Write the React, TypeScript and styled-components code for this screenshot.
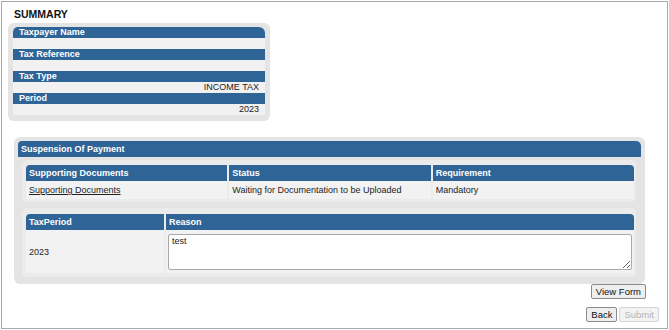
import React from "react";
import styled, { createGlobalStyle } from "styled-components";

const Global = createGlobalStyle`
  html, body { margin: 0; padding: 0; background: #ffffff; }
  body { font-family: "Liberation Sans", Arial, sans-serif; font-size: 9px; color: #222; }
  * { box-sizing: border-box; }
`;

const BLUE = "#2f6496";

const Frame = styled.div`
  margin: 1px 0 0 1px;
  width: 667px;
  height: 328px;
  border: 1px solid #a8a8a8;
  display: flex;
  flex-direction: column;
`;

const Title = styled.h1`
  margin: 4px 0 0 12px;
  height: 17px;
  line-height: 16px;
  font-size: 10.5px;
  font-weight: bold;
  color: #111;
`;

const SummaryPanel = styled.div`
  margin-left: 6px;
  width: 262px;
  padding: 4px 5px 6px;
  background: #e4e4e4;
  border-radius: 6px;
  display: flex;
  flex-direction: column;
`;

const FieldHeader = styled.div<{ $first?: boolean }>`
  height: 11px;
  line-height: 11px;
  background: ${BLUE};
  color: #fff;
  font-weight: bold;
  padding-left: 6px;
  border-radius: ${(p) => (p.$first ? "5px 6px 0 0" : "0")};
`;

const FieldValue = styled.div`
  height: 11px;
  line-height: 11px;
  background: #f1f1f1;
  text-align: right;
  padding-right: 6px;
  color: #222;
`;

const Panel = styled.section`
  margin: 16px 0 0 12px;
  width: 631px;
  padding: 4px 4px 7px;
  background: #e4e4e4;
  border-radius: 6px;
  display: flex;
  flex-direction: column;
`;

const PanelHeader = styled.div`
  height: 16px;
  line-height: 16px;
  background: ${BLUE};
  color: #fff;
  font-weight: bold;
  padding-left: 3px;
  border-radius: 4px 5px 0 0;
`;

const InnerPanel = styled.div<{ $gap: number; $top: number; $bottom: number }>`
  margin: ${(p) => p.$gap}px 5px 0 4px;
  padding: ${(p) => p.$top}px 2px ${(p) => p.$bottom}px 4px;
  background: #ebebeb;
  border-radius: 5px;
`;

const Table = styled.div<{ $cols: string }>`
  display: grid;
  grid-template-columns: ${(p) => p.$cols};
  column-gap: 2px;
`;

const Th = styled.div<{ $pos?: "first" | "last" }>`
  height: 16px;
  line-height: 16px;
  background: ${BLUE};
  color: #fff;
  font-weight: bold;
  padding-left: 3px;
  border-radius: ${(p) =>
    p.$pos === "first" ? "4px 0 0 0" : p.$pos === "last" ? "0 4px 0 0" : "0"};
`;

const Td = styled.div<{ $h: number }>`
  height: ${(p) => p.$h}px;
  background: #f2f2f2;
  padding-left: 3px;
  display: flex;
  align-items: center;
  color: #222;
`;

const DocLink = styled.a`
  color: #222;
  text-decoration: underline;
  cursor: pointer;
`;

const ReasonCell = styled.div`
  height: 43px;
  background: #f2f2f2;
  padding: 4px 2px 3px 2px;
  display: flex;
`;

const Reason = styled.textarea`
  flex: 1;
  height: 36px;
  margin: 0;
  border: 1px solid #a9a9a9;
  border-radius: 2px;
  padding: 1px 3px;
  font-family: "Liberation Sans", Arial, sans-serif;
  font-size: 9px;
  color: #222;
  background: #fff;
  resize: both;
`;

const ButtonRow = styled.div<{ $top: number; $right: number }>`
  display: flex;
  justify-content: flex-end;
  gap: 2px;
  margin-top: ${(p) => p.$top}px;
  padding-right: ${(p) => p.$right}px;
`;

const Button = styled.button`
  height: 15px;
  padding: 0 4px;
  font-family: "Liberation Sans", Arial, sans-serif;
  font-size: 9.5px;
  line-height: 13px;
  color: #111;
  background: #efefef;
  border: 1px solid #8a8a8a;
  border-radius: 2px;
  &:disabled {
    color: #b5b5b5;
    border-color: #d4d4d4;
    background: #f3f3f3;
  }
`;

const fields: [string, string][] = [
  ["Taxpayer Name", ""],
  ["Tax Reference", ""],
  ["Tax Type", "INCOME TAX"],
  ["Period", "2023"],
];

export default function App() {
  return (
    <>
      <Global />
      <Frame>
        <Title>SUMMARY</Title>
        <SummaryPanel>
          {fields.map(([label, value], i) => (
            <React.Fragment key={label}>
              <FieldHeader $first={i === 0}>{label}</FieldHeader>
              <FieldValue>{value}</FieldValue>
            </React.Fragment>
          ))}
        </SummaryPanel>

        <Panel>
          <PanelHeader>Suspension Of Payment</PanelHeader>
          <InnerPanel $gap={3} $top={5} $bottom={3}>
            <Table $cols="1fr 1fr 1fr">
              <Th $pos="first">Supporting Documents</Th>
              <Th>Status</Th>
              <Th $pos="last">Requirement</Th>
              <Td $h={18}>
                <DocLink>Supporting Documents</DocLink>
              </Td>
              <Td $h={18}>Waiting for Documentation to be Uploaded</Td>
              <Td $h={18}>Mandatory</Td>
            </Table>
          </InnerPanel>
          <InnerPanel $gap={6} $top={6} $bottom={4}>
            <Table $cols="138px 1fr">
              <Th $pos="first">TaxPeriod</Th>
              <Th $pos="last">Reason</Th>
              <Td $h={43}>2023</Td>
              <ReasonCell>
                <Reason defaultValue="test" />
              </ReasonCell>
            </Table>
          </InnerPanel>
        </Panel>

        <ButtonRow $top={0} $right={21}>
          <Button>View Form</Button>
        </ButtonRow>
        <ButtonRow $top={8} $right={8}>
          <Button>Back</Button>
          <Button disabled>Submit</Button>
        </ButtonRow>
      </Frame>
    </>
  );
}
